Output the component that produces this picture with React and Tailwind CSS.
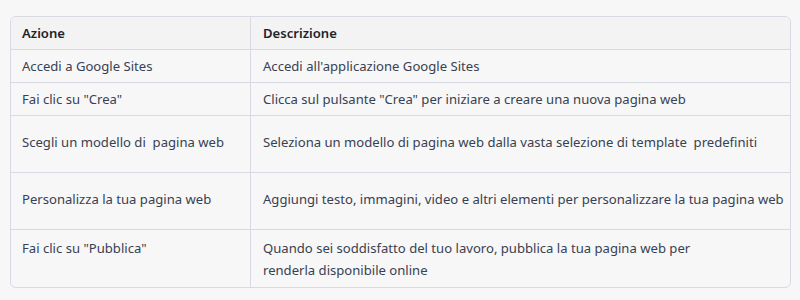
export default function App() {
  const rows = [
    { a: "Accedi a Google Sites", d: ["Accedi all'applicazione Google Sites"], h: "h-[33px]", pt: "pt-[5px]" },
    { a: 'Fai clic su "Crea"', d: ['Clicca sul pulsante "Crea" per iniziare a creare una nuova pagina web'], h: "h-[33px]", pt: "pt-[5px]" },
    { a: "Scegli un modello di\u00a0 pagina web", d: ["Seleziona un modello di pagina web dalla vasta selezione di template\u00a0 predefiniti"], h: "h-[57px]", pt: "pt-[15px]" },
    { a: "Personalizza la tua pagina web", d: ["Aggiungi testo, immagini, video e altri elementi per personalizzare la tua pagina web"], h: "h-[57px]", pt: "pt-[15px]" },
    { a: 'Fai clic su "Pubblica"', d: ["Quando sei soddisfatto del tuo lavoro, pubblica la tua pagina web per", "renderla disponibile online"], h: "h-[57px]", pt: "pt-[7px]", last: true },
  ];
  return (
    <div className="w-[800px] h-[300px] bg-[#f7f7f8] pt-[16px] pl-[10px] text-[13.1px] leading-[22px] text-[#374151]" style={{ fontFamily: '"Noto Sans", "Open Sans", sans-serif' }}>
      <div className="w-[781px] border border-[#d9d9e3] rounded-[6px] overflow-hidden">
        <div className="flex h-[33px] bg-[#f3f3f4] border-b border-[#d9d9e3] font-semibold text-[#1f2328]">
          <div className="w-[240px] shrink-0 border-r border-[#d9d9e3] pl-[11px] pt-[5px]">Azione</div>
          <div className="flex-1 pl-[12px] pt-[5px]">Descrizione</div>
        </div>
        {rows.map((r, i) => (
          <div key={i} className={`flex ${r.h} ${r.last ? "" : "border-b border-[#d9d9e3]"}`}>
            <div className={`w-[240px] shrink-0 border-r border-[#d9d9e3] pl-[11px] ${r.pt}`}>{r.a}</div>
            <div className={`flex-1 pl-[12px] whitespace-nowrap ${r.pt}`}>
              {r.d.map((t, j) => (
                <div key={j}>{t}</div>
              ))}
            </div>
          </div>
        ))}
      </div>
    </div>
  );
}
